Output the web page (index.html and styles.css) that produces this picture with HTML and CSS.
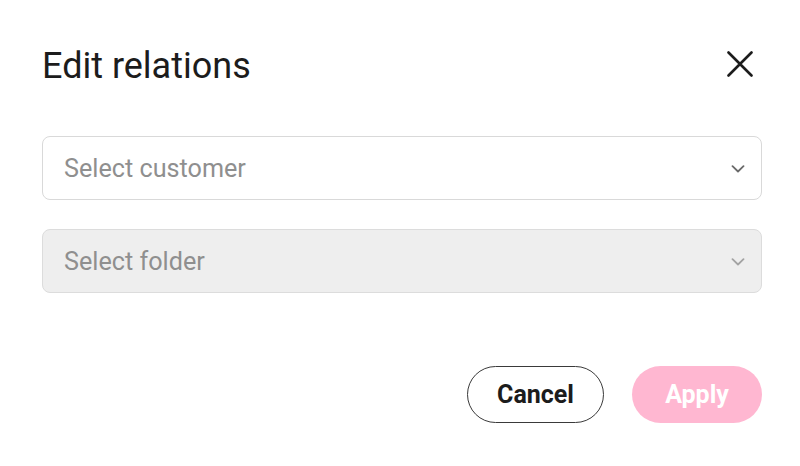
FILE: index.html
```html
<!DOCTYPE html>
<html lang="en">
<head>
<meta charset="utf-8">
<title>Edit relations</title>
<link rel="stylesheet" href="styles.css">
</head>
<body>
<div class="dialog">
  <div class="dialog-header">
    <h1 class="dialog-title">Edit relations</h1>
    <button class="close-btn" aria-label="Close">
      <svg width="26" height="26" viewBox="0 0 26 26"><path d="M1.5 1.5 L24.5 24.5 M24.5 1.5 L1.5 24.5" stroke="#1c1c1c" stroke-width="2.6" stroke-linecap="round" fill="none"/></svg>
    </button>
  </div>
  <div class="fields">
    <div class="select">
      <span class="select-placeholder">Select customer</span>
      <svg class="chevron" width="14" height="8" viewBox="0 0 14 8"><path d="M1.5 1.2 L7 6.5 L12.5 1.2" stroke="#6a6a6a" stroke-width="1.8" fill="none" stroke-linecap="round" stroke-linejoin="round"/></svg>
    </div>
    <div class="select select-disabled">
      <span class="select-placeholder">Select folder</span>
      <svg class="chevron" width="14" height="8" viewBox="0 0 14 8"><path d="M1.5 1.2 L7 6.5 L12.5 1.2" stroke="#a3a3a3" stroke-width="1.8" fill="none" stroke-linecap="round" stroke-linejoin="round"/></svg>
    </div>
  </div>
  <div class="actions">
    <button class="btn btn-cancel">Cancel</button>
    <button class="btn btn-apply" disabled>Apply</button>
  </div>
</div>
</body>
</html>
```
FILE: styles.css
```css
html, body {
  margin: 0;
  padding: 0;
  background: #ffffff;
}
body {
  font-family: Roboto, "Liberation Sans", Arial, sans-serif;
  color: #1c1c1c;
}
.dialog {
  width: 800px;
  height: 466px;
  box-sizing: border-box;
  padding: 45px 38px 0 42px;
  display: flex;
  flex-direction: column;
}
.dialog-header {
  display: flex;
  align-items: center;
  justify-content: space-between;
  height: 43px;
}
.dialog-title {
  margin: 0;
  font-size: 36px;
  font-weight: 400;
  line-height: 43px;
  color: #1c1c1c;
}
.close-btn {
  border: none;
  background: none;
  padding: 0;
  margin: 0 9px 5px 0;
  width: 26px;
  height: 26px;
  display: flex;
  cursor: pointer;
}
.fields {
  margin-top: 48px;
  display: flex;
  flex-direction: column;
  gap: 29px;
}
.select {
  height: 64px;
  box-sizing: border-box;
  border: 1px solid #d9d9d9;
  border-radius: 8px;
  background: #ffffff;
  display: flex;
  align-items: center;
  justify-content: space-between;
  padding: 1px 16px 0 21px;
}
.select-disabled {
  background: #eeeeee;
  border-color: #dcdcdc;
}
.select-placeholder {
  font-size: 25.2px;
  color: #8f8f8f;
  line-height: 30px;
}
.chevron {
  display: block;
}
.actions {
  margin-top: 73px;
  display: flex;
  justify-content: flex-end;
  gap: 28px;
}
.btn {
  height: 57px;
  border-radius: 29px;
  font-family: Roboto, "Liberation Sans", Arial, sans-serif;
  font-size: 25px;
  font-weight: 700;
  padding: 0;
  cursor: pointer;
}
.btn-cancel {
  width: 137px;
  border: 1px solid #3a3a3a;
  background: #ffffff;
  color: #1c1c1c;
}
.btn-apply {
  width: 130px;
  border: none;
  background: #ffb7d1;
  color: #ffffff;
}
```
